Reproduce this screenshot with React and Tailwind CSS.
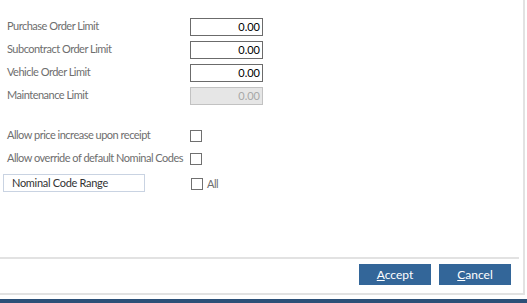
import React from 'react';

const font = { fontFamily: 'Lato, "Liberation Sans", sans-serif' };

function AmountRow({ label, disabled }) {
  return (
    <div className="flex items-center h-[23px]">
      <span className="w-[190px] shrink-0 pl-[7px] text-[11px] tracking-[-0.5px] text-[#6e6e6e]">{label}</span>
      <div
        className={
          disabled
            ? 'w-[73px] h-[18px] border border-[#c2c2c2] bg-[#e6e6e6] text-[#a8a8a8] text-[11px] text-right pr-[2px] leading-[16px]'
            : 'w-[73px] h-[18px] border border-[#6b6b6b] bg-white text-black text-[11px] text-right pr-[2px] leading-[16px]'
        }
      >
        0.00
      </div>
    </div>
  );
}

function Check() {
  return <span className="block shrink-0 w-[12px] h-[12px] border border-[#707070] bg-white" />;
}

export default function App() {
  return (
    <div className="w-[527px] h-[303px] bg-white flex flex-col" style={font}>
      <div className="flex h-[295px]">
        <div className="w-[525px] border-r-2 border-b-2 border-[#e2e2e2] flex flex-col">
          <div className="flex-1 pt-[15px]">
            <AmountRow label="Purchase Order Limit" />
            <AmountRow label="Subcontract Order Limit" />
            <AmountRow label="Vehicle Order Limit" />
            <AmountRow label="Maintenance Limit" disabled />

            <div className="mt-[17px] flex items-center h-[23px]">
              <span className="w-[190px] shrink-0 pl-[7px] text-[11px] tracking-[-0.5px] text-[#6e6e6e]">Allow price increase upon receipt</span>
              <Check />
            </div>
            <div className="flex items-center h-[23px]">
              <span className="w-[190px] shrink-0 pl-[7px] text-[11px] tracking-[-0.5px] text-[#6e6e6e] whitespace-nowrap">Allow override of default Nominal Codes</span>
              <Check />
            </div>
            <div className="flex items-center mt-[3px]">
              <div className="ml-[3px] w-[142px] h-[18px] border border-[#c9d3e2] text-[11px] tracking-[-0.3px] text-[#333] pl-[8px] leading-[16px]">
                Nominal Code Range
              </div>
              <div className="ml-[46px] mt-[3px] flex items-center gap-[4px]">
                <Check />
                <span className="text-[11px] tracking-[-0.5px] text-[#6e6e6e]">All</span>
              </div>
            </div>
          </div>
          <div className="mr-[4px] border-t-2 border-[#e2e2e2] h-[36px] flex justify-end items-start pt-[5px] pr-[8px] gap-[8px]">
            <button className="w-[72px] h-[21px] bg-[#336699] text-white text-[12px] leading-[21px]">
              <span className="underline">A</span>ccept
            </button>
            <button className="w-[72px] h-[21px] bg-[#336699] text-white text-[12px] leading-[21px]">
              <span className="underline">C</span>ancel
            </button>
          </div>
        </div>
      </div>
      <div className="h-[4px]" />
      <div className="flex-1 bg-[#2c5078]" />
    </div>
  );
}
